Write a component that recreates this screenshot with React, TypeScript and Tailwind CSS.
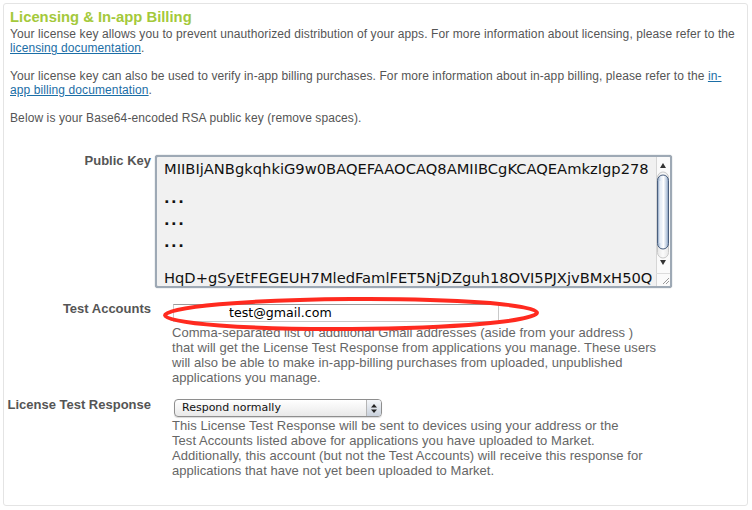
import React from "react";

// Licensing & in-app billing settings panel

const keyLines = [
  "MIIBIjANBgkqhkiG9w0BAQEFAAOCAQ8AMIIBCgKCAQEAmkzIgp278",
  "...",
  "...",
  "...",
];
const keyTail = "HqD+gSyEtFEGEUH7MledFamlFET5NjDZguh18OVI5PJXjvBMxH50Q";

function ScrollBar() {
  return (
    <svg width="14" height="129" viewBox="0 0 14 129" className="shrink-0">
      <defs>
        <linearGradient id="thumb" x1="0" x2="1" y1="0" y2="0">
          <stop offset="0" stopColor="#8fa6c4" />
          <stop offset="0.3" stopColor="#e4ecf6" />
          <stop offset="0.55" stopColor="#ffffff" />
          <stop offset="0.8" stopColor="#c3d1e3" />
          <stop offset="1" stopColor="#7f98b8" />
        </linearGradient>
        <linearGradient id="track" x1="0" x2="1" y1="0" y2="0">
          <stop offset="0" stopColor="#e6e6e6" />
          <stop offset="0.5" stopColor="#fbfbfb" />
          <stop offset="1" stopColor="#e6e6e6" />
        </linearGradient>
      </defs>
      <rect x="0" y="0" width="14" height="129" fill="#fafafa" />
      <line x1="0.5" y1="0" x2="0.5" y2="129" stroke="#d6d6d6" />
      {/* up arrow */}
      <path d="M4 11 L10 11 L7 6 Z" fill="#333" />
      {/* track */}
      <rect x="1.5" y="15" width="11" height="86" rx="5.5" fill="url(#track)" stroke="#c8c8c8" />
      {/* thumb */}
      <rect x="1.5" y="18" width="11" height="74" rx="5.5" fill="url(#thumb)" stroke="#4a5f7e" />
      <line x1="4" y1="24" x2="4" y2="86" stroke="#ffffff" strokeOpacity="0.7" />
      {/* down arrow */}
      <path d="M4 103 L10 103 L7 108 Z" fill="#333" />
      <line x1="0" y1="116.5" x2="14" y2="116.5" stroke="#dcdcdc" />
      {/* resize grip */}
      <path d="M13 121 L7 127 M13 124 L10 127" stroke="#9a9a9a" strokeWidth="1" />
    </svg>
  );
}

function SelectArrows() {
  return (
    <svg width="8" height="11" viewBox="0 0 8 11">
      <path d="M1 4.5 L7 4.5 L4 1 Z" fill="#222" />
      <path d="M1 6.5 L7 6.5 L4 10 Z" fill="#222" />
    </svg>
  );
}

export default function App() {
  return (
    <div
      className="w-[752px] h-[510px] bg-white pt-[3px] pl-[3px]"
      style={{ fontFamily: '"Liberation Sans", Arial, sans-serif' }}
    >
      <div className="w-[745px] h-[503px] border border-[#e4e4e4] rounded-[3px] bg-white">
        {/* heading + intro ------------------------------------------- */}
        <div className="px-[6px] pt-[4px]">
          <h2 className="text-[14.8px] font-bold leading-[19px] text-[#a4c93b]">
            Licensing &amp; In-app Billing
          </h2>
          <div className="text-[12px] leading-[14px] tracking-[0.1px] text-[#555] whitespace-nowrap">
            <p>
              Your license key allows you to prevent unauthorized distribution of your apps. For more
              information about licensing, please refer to the
              <br />
              <a href="#" className="text-[#1b6ea6] underline">
                licensing documentation
              </a>
              .
            </p>
            <p className="mt-[14px]">
              Your license key can also be used to verify in-app billing purchases. For more information
              about in-app billing, please refer to the{" "}
              <a href="#" className="text-[#1b6ea6] underline">
                in-
                <br />
                app billing documentation
              </a>
              .
            </p>
            <p className="mt-[14px]">Below is your Base64-encoded RSA public key (remove spaces).</p>
          </div>
        </div>

        {/* form rows ------------------------------------------------- */}
        <div className="mt-[30px] grid grid-cols-[147px_1fr] gap-x-[4px] items-start">
          <label className="text-right text-[13px] leading-[14px] font-bold text-[#555] -mt-[1px] whitespace-nowrap">
            Public Key
          </label>
          <div className="w-[517px] h-[133px] flex rounded-[3px] border-2 border-[#9ea9b5] bg-[#f1f1f1] shadow-[0_0_1px_#6b7886] overflow-hidden">
            <div
              className="flex-1 pl-[7px] pt-[1px] text-[14.7px] leading-[22px] text-[#111] overflow-hidden whitespace-nowrap"
              style={{ fontFamily: '"DejaVu Sans", Verdana, sans-serif' }}
            >
              {keyLines.map((line, i) => (
                <div key={i} className={i === 1 ? "mt-[7px] tracking-[1.5px] font-bold" : i > 1 ? "tracking-[1.5px] font-bold" : ""}>
                  {line}
                </div>
              ))}
              <div className="mt-[14px]">{keyTail}</div>
            </div>
            <ScrollBar />
          </div>

          <label className="mt-[14px] text-right text-[13px] leading-[14px] font-bold text-[#555] whitespace-nowrap">
            Test Accounts
          </label>
          <div className="mt-[14px] pt-[2px] relative">
            <input
              defaultValue="test@gmail.com"
              className="ml-[18px] block w-[326px] h-[18px] pl-[55px] border border-[#c9c9c9] border-t-[#9b9b9b] bg-white text-[12.6px] text-black outline-none"
              style={{ fontFamily: '"DejaVu Sans", Verdana, sans-serif' }}
            />
            <p className="ml-[17px] mt-[3px] text-[13px] leading-[15px] tracking-[0.05px] text-[#666] whitespace-nowrap">
              Comma-separated list of additional Gmail addresses (aside from your address )
              <br />
              that will get the License Test Response from applications you manage. These users
              <br />
              will also be able to make in-app-billing purchases from uploaded, unpublished
              <br />
              applications you manage.
            </p>
            {/* red marker around the test account field */}
            <svg
              width="384"
              height="40"
              viewBox="0 0 384 40"
              className="absolute left-[6px] -top-[8px] pointer-events-none"
            >
              <ellipse
                cx="190"
                cy="20"
                rx="186"
                ry="15"
                fill="none"
                stroke="#ff2a1f"
                strokeWidth="4"
                transform="rotate(-0.4 190 20)"
              />
            </svg>
          </div>

          <label className="mt-[13px] text-right text-[13px] leading-[14px] font-bold text-[#555] whitespace-nowrap">
            License Test Response
          </label>
          <div className="mt-[13px] pt-[1px]">
            <div className="ml-[19px] w-[208px] h-[18px] flex items-center rounded-[4px] border border-[#8e8e8e] bg-gradient-to-b from-white to-[#e9e9e9] shadow-[0_1px_1px_rgba(0,0,0,0.15)]">
              <span
                className="flex-1 pl-[7px] text-[11px] leading-[16px] text-[#111]"
                style={{ fontFamily: '"DejaVu Sans", Verdana, sans-serif' }}
              >
                Respond normally
              </span>
              <span className="w-[15px] h-full flex items-center justify-center border-l border-[#b5b5b5] rounded-r-[3px] bg-gradient-to-b from-[#f4f6f9] to-[#c9d1dc]">
                <SelectArrows />
              </span>
            </div>
            <p className="ml-[17px] mt-[1px] text-[13px] leading-[15px] tracking-[0.05px] text-[#666] whitespace-nowrap">
              This License Test Response will be sent to devices using your address or the
              <br />
              Test Accounts listed above for applications you have uploaded to Market.
              <br />
              Additionally, this account (but not the Test Accounts) will receive this response for
              <br />
              applications that have not yet been uploaded to Market.
            </p>
          </div>
        </div>
      </div>
    </div>
  );
}
